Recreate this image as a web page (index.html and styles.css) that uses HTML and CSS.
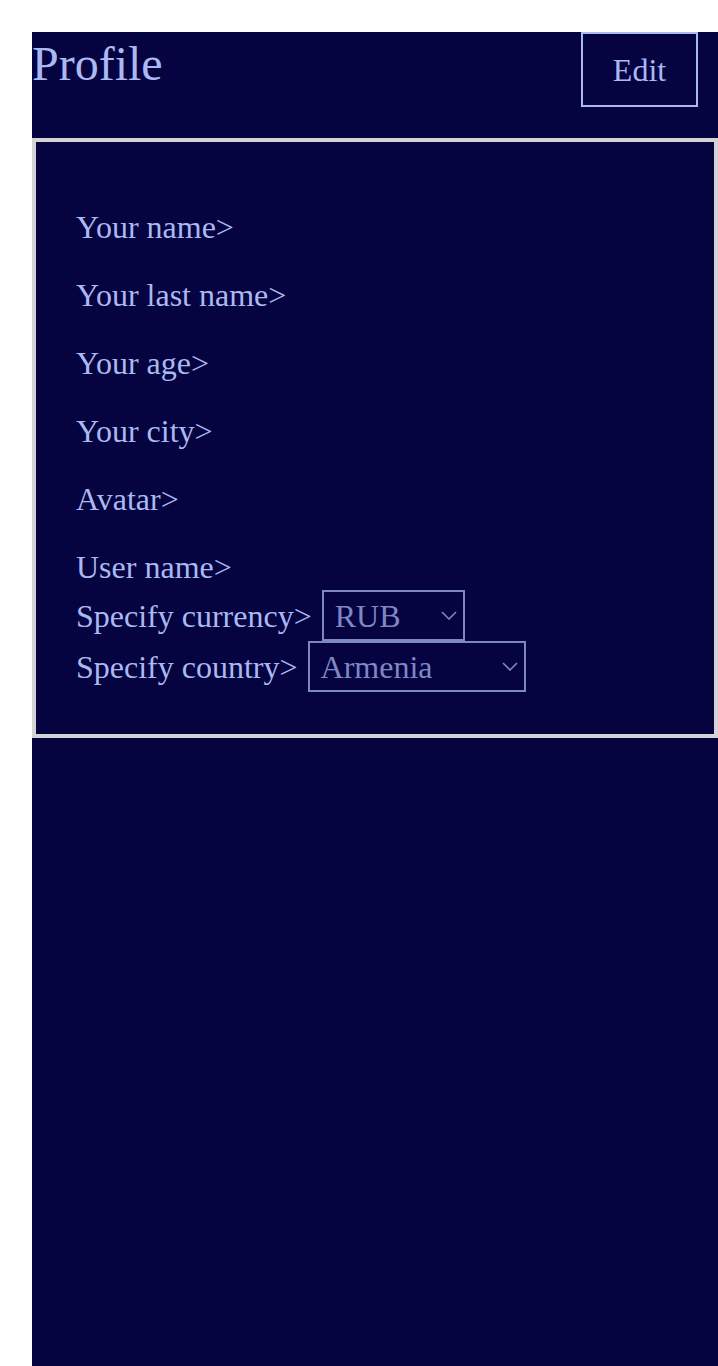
FILE: index.html
```html
<!DOCTYPE html>
<html lang="en">
<head>
<meta charset="utf-8">
<title>Profile</title>
<link rel="stylesheet" href="styles.css">
</head>
<body>
<main class="page">
  <header class="head">
    <h1 class="title">Profile</h1>
    <button class="edit-btn" type="button">Edit</button>
  </header>
  <section class="card">
    <p class="field">Your name&gt;</p>
    <p class="field">Your last name&gt;</p>
    <p class="field">Your age&gt;</p>
    <p class="field">Your city&gt;</p>
    <p class="field">Avatar&gt;</p>
    <p class="field field-last">User name&gt;</p>
    <div class="row">
      <span class="row-label">Specify currency&gt;</span>
      <span class="select-wrap">
        <select class="select select-currency">
          <option>RUB</option>
          <option>USD</option>
          <option>EUR</option>
        </select>
        <svg class="chevron" width="16" height="9" viewBox="0 0 16 9"><path d="M1 1 L8 8 L15 1" fill="none" stroke="currentColor" stroke-width="1.6"/></svg>
      </span>
    </div>
    <div class="row">
      <span class="row-label">Specify country&gt;</span>
      <span class="select-wrap">
        <select class="select select-country">
          <option>Armenia</option>
          <option>Russia</option>
          <option>Georgia</option>
        </select>
        <svg class="chevron" width="16" height="9" viewBox="0 0 16 9"><path d="M1 1 L8 8 L15 1" fill="none" stroke="currentColor" stroke-width="1.6"/></svg>
      </span>
    </div>
  </section>
</main>
</body>
</html>
```

FILE: styles.css
```css
html, body {
  margin: 0;
  padding: 0;
  background: #ffffff;
}

body {
  font-family: "Liberation Serif", "Times New Roman", serif;
  color: #aab9f2;
}

.page {
  margin: 32px 0 0 32px;
  min-height: calc(100vh - 32px);
  background: #060341;
  overflow: hidden;
}

.head {
  display: flex;
  justify-content: space-between;
  align-items: flex-start;
  padding-right: 20px;
  height: 106px;
}

.title {
  margin: 4px 0 0 0;
  font-size: 48px;
  font-weight: normal;
  line-height: normal;
  color: #aab9f2;
}

.edit-btn {
  width: 117px;
  height: 75px;
  border: 2px solid #aab9f2;
  background: transparent;
  color: #aab9f2;
  font-family: "Liberation Serif", "Times New Roman", serif;
  font-size: 32px;
  padding: 2px 0 0 0;
  line-height: normal;
}

.card {
  border: 4px solid #d4d4d4;
  padding: 35px 40px 42px 40px;
}

.field {
  margin: 32px 0;
  font-size: 32px;
  line-height: 36px;
}

.field-last {
  margin-bottom: 5px;
}

.row {
  display: flex;
  align-items: baseline;
  font-size: 32px;
  line-height: normal;
}

.row-label {
  margin-right: 10px;
}

.select-wrap {
  position: relative;
  display: inline-flex;
  color: #7e87c6;
}

.select {
  appearance: none;
  -webkit-appearance: none;
  box-sizing: border-box;
  height: 51px;
  border: 2px solid #7e87c6;
  border-radius: 0;
  background: transparent;
  color: #7e87c6;
  font-family: "Liberation Serif", "Times New Roman", serif;
  font-size: 32px;
  line-height: normal;
  padding: 5px 30px 5px 11px;
  margin: 0;
}

.select-currency {
  width: 143px;
}

.select-country {
  width: 218px;
}

.chevron {
  position: absolute;
  right: 8px;
  top: 21px;
  pointer-events: none;
}
```
